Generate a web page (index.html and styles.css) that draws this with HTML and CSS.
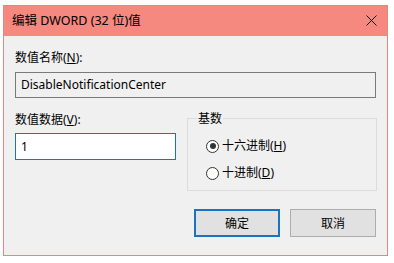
FILE: index.html
```html
<!DOCTYPE html>
<html lang="zh">
<head>
<meta charset="utf-8">
<title>编辑 DWORD (32 位)值</title>
<link rel="stylesheet" href="styles.css">
</head>
<body>
<div class="dialog">
  <div class="titlebar">
    <span class="title">编辑 DWORD (32 位)值</span>
    <span class="close"><svg width="11" height="11" viewBox="0 0 11 11"><path d="M0.5 0.5 L10.5 10.5 M10.5 0.5 L0.5 10.5" stroke="#111" stroke-width="1" fill="none"/></svg></span>
  </div>
  <div class="content">
    <div class="label">数值名称(<u>N</u>):</div>
    <div class="namefield">DisableNotificationCenter</div>
    <div class="lower">
      <div class="leftcol">
        <div class="label">数值数据(<u>V</u>):</div>
        <div class="datafield">1</div>
      </div>
      <div class="group">
        <span class="legend">基数</span>
        <div class="radio"><span class="circle checked"></span><span>十六进制(<u>H</u>)</span></div>
        <div class="radio"><span class="circle"></span><span>十进制(<u>D</u>)</span></div>
      </div>
    </div>
    <div class="buttons">
      <div class="btn default">确定</div>
      <div class="btn">取消</div>
    </div>
  </div>
</div>
</body>
</html>
```
FILE: styles.css
```css
html, body {
  margin: 0;
  padding: 0;
  background: #ffffff;
}
body {
  padding: 5px 0 0 3px;
  font-family: "Noto Sans", "Noto Sans CJK SC", sans-serif;
  font-size: 12px;
  color: #000;
}
u { text-decoration: underline; text-underline-offset: 1px; }
.dialog {
  width: 383px;
  height: 249px;
  border: 1px solid #e4877d;
  background: #f0f0f0;
  display: flex;
  flex-direction: column;
}
.titlebar {
  height: 30px;
  background: #f5887f;
  display: flex;
  align-items: center;
  justify-content: space-between;
  padding: 0 10px 0 8px;
}
.title {
  font-size: 12.5px;
  line-height: 16px;
  margin-top: -1px;
}
.close { display: flex; margin-top: -1px; }
.content {
  padding: 14px 10px 0 11px;
  display: flex;
  flex-direction: column;
}
.label {
  height: 16px;
  line-height: 16px;
}
.namefield {
  margin-top: 6px;
  height: 24px;
  margin-right: 1px;
  border: 1px solid #7a7a7a;
  background: #f0f0f0;
  line-height: 24px;
  padding-left: 5px;
}
.lower {
  display: grid;
  grid-template-columns: 161px 190px;
  column-gap: 11px;
  align-items: start;
}
.leftcol {
  margin-top: 14px;
  display: flex;
  flex-direction: column;
}
.datafield {
  margin-top: 5px;
  height: 25px;
  border: 1px solid #1a73c2;
  background: #fff;
  line-height: 25px;
  padding-left: 5px;
}
.group {
  position: relative;
  margin-top: 20px;
  border: 1px solid #dcdcdc;
  padding: 19px 0 0 18px;
  box-sizing: border-box;
  height: 73px;
}
.legend {
  position: absolute;
  top: -8px;
  left: 9px;
  padding: 0 1px;
  background: #f0f0f0;
  line-height: 16px;
}
.radio {
  display: flex;
  align-items: center;
  height: 16px;
  line-height: 16px;
  margin-bottom: 11px;
  gap: 3px;
}
.circle {
  width: 11px;
  height: 11px;
  border: 1px solid #333;
  border-radius: 50%;
  background: #fff;
  position: relative;
}
.circle.checked::after {
  content: "";
  position: absolute;
  left: 2.5px;
  top: 2.5px;
  width: 6px;
  height: 6px;
  border-radius: 50%;
  background: #333;
}
.buttons {
  margin-top: 18px;
  display: flex;
  justify-content: flex-end;
  gap: 10px;
  padding-right: 1px;
}
.btn {
  width: 84px;
  height: 26px;
  border: 1px solid #adadad;
  background: #e1e1e1;
  display: flex;
  align-items: center;
  justify-content: center;
}
.btn.default {
  border: 2px solid #1a73c2;
  width: 82px;
  height: 24px;
}
```
